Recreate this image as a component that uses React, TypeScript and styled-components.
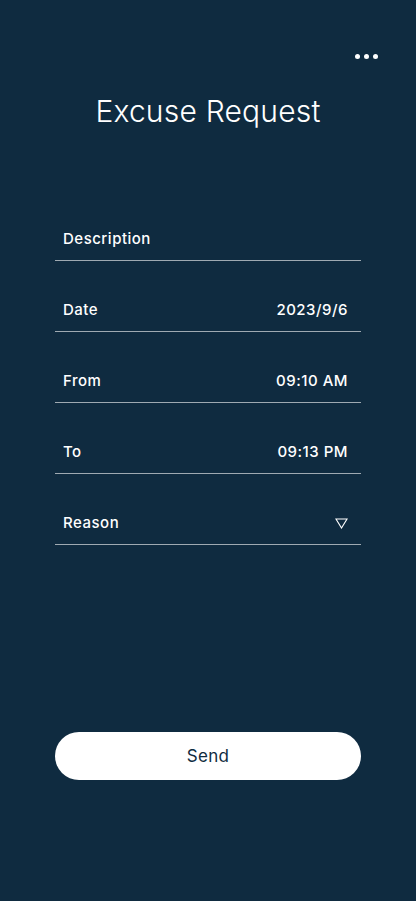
import React from "react";
import styled, { createGlobalStyle } from "styled-components";

const Global = createGlobalStyle`
  html, body { margin: 0; padding: 0; background: #0f2b40; }
  * { box-sizing: border-box; }
`;

const Screen = styled.div`
  min-height: 901px;
  width: 416px;
  background: #0f2b40;
  display: flex;
  flex-direction: column;
  font-family: Inter, "Noto Sans", sans-serif;
  color: #ffffff;
`;

const TopBar = styled.div`
  display: flex;
  justify-content: flex-end;
  padding: 51px 38px 0 0;
  height: 61px;
`;

const Dots = styled.div`
  display: flex;
  gap: 4px;
  height: 10px;
  align-items: center;
`;

const Dot = styled.span`
  width: 5px;
  height: 5px;
  border-radius: 50%;
  background: #ffffff;
`;

const Title = styled.h1`
  margin: 32px 0 0;
  text-align: center;
  font-weight: 300;
  font-size: 30px;
  line-height: 36px;
  letter-spacing: 0.2px;
`;

const Form = styled.div`
  margin: 61px 55px 0;
  display: flex;
  flex-direction: column;
`;

const Row = styled.div`
  height: 71px;
  display: flex;
  align-items: flex-end;
  justify-content: space-between;
  padding: 0 13px 11px 8px;
  border-bottom: 1px solid rgba(255, 255, 255, 0.6);
  font-size: 15px;
  font-weight: 500;
  line-height: 20px;
  letter-spacing: 0.5px;
`;

const Label = styled.span``;
const Value = styled.span``;

const Caret = styled.svg`
  width: 13px;
  height: 11px;
  margin-bottom: 4px;
`;

const SendButton = styled.button`
  margin: 187px 55px 0;
  height: 48px;
  border: none;
  border-radius: 24px;
  background: #ffffff;
  color: #0f2b40;
  font-family: Inter, "Noto Sans", sans-serif;
  font-size: 17px;
  font-weight: 400;
  letter-spacing: 0.3px;
  cursor: pointer;
`;

const fields: { label: string; value?: string; caret?: boolean }[] = [
  { label: "Description" },
  { label: "Date", value: "2023/9/6" },
  { label: "From", value: "09:10 AM" },
  { label: "To", value: "09:13 PM" },
  { label: "Reason", caret: true },
];

export default function App() {
  return (
    <>
      <Global />
      <Screen>
        <TopBar>
          <Dots>
            <Dot />
            <Dot />
            <Dot />
          </Dots>
        </TopBar>
        <Title>Excuse Request</Title>
        <Form>
          {fields.map((f) => (
            <Row key={f.label}>
              <Label>{f.label}</Label>
              {f.value && <Value>{f.value}</Value>}
              {f.caret && (
                <Caret viewBox="0 0 13 11">
                  <path d="M1 1 H12 L6.5 10 Z" fill="none" stroke="#fff" strokeWidth="1.1" strokeLinejoin="miter" />
                </Caret>
              )}
            </Row>
          ))}
        </Form>
        <SendButton>Send</SendButton>
      </Screen>
    </>
  );
}
